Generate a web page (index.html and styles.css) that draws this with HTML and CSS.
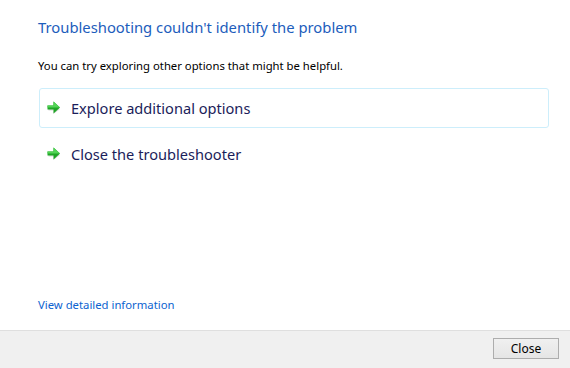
FILE: index.html
```html
<!DOCTYPE html>
<html>
<head>
    <title>Troubleshooting</title>
    <link rel="stylesheet" href="styles.css">
</head>
<body>
    <div class="dialog">
        <div class="content">
            <h1 class="title">Troubleshooting couldn't identify the problem</h1>
            <p class="intro">You can try exploring other options that might be helpful.</p>

            <div class="options">
                <a class="option option-hover" href="#">
                    <svg class="arrow" width="14" height="14" viewBox="0 0 14 14">
                        <path d="M1.5 6.5h5V3l6.5 5-6.5 5V9.5h-5z" fill="#aaa" opacity="0.45"/>
                        <path d="M0.5 4.5h6V0.5l6.5 6-6.5 6V8.5h-6z" fill="#1fa526"/>
                        <path d="M0.5 4.5h6V0.5l6.5 6H0.5z" fill="#52d456"/>
                    </svg>
                    <span>Explore additional options</span>
                </a>
                <a class="option" href="#">
                    <svg class="arrow" width="14" height="14" viewBox="0 0 14 14">
                        <path d="M1.5 6.5h5V3l6.5 5-6.5 5V9.5h-5z" fill="#aaa" opacity="0.45"/>
                        <path d="M0.5 4.5h6V0.5l6.5 6-6.5 6V8.5h-6z" fill="#1fa526"/>
                        <path d="M0.5 4.5h6V0.5l6.5 6H0.5z" fill="#52d456"/>
                    </svg>
                    <span>Close the troubleshooter</span>
                </a>
            </div>

            <a class="details" href="#">View detailed information</a>
        </div>

        <div class="footer">
            <button class="close-btn">Close</button>
        </div>
    </div>
</body>
</html>
```

FILE: styles.css
```css
html, body {
    margin: 0;
    padding: 0;
    background-color: #fff;
    font-family: "Noto Sans", "Open Sans", sans-serif;
}

.dialog {
    width: 570px;
    height: 368px;
    display: flex;
    flex-direction: column;
}

.content {
    flex: 1;
    padding: 17px 21px 0 38px;
    display: flex;
    flex-direction: column;
}

.title {
    margin: 0;
    font-size: 14.8px;
    font-weight: normal;
    color: #1d5dbc;
    line-height: 20px;
}

.intro {
    margin: 21px 0 0 0;
    font-size: 11.3px;
    color: #000;
    line-height: 16px;
}

.options {
    margin-top: 14px;
    display: flex;
    flex-direction: column;
    gap: 6px;
}

.option {
    display: flex;
    align-items: center;
    height: 38px;
    margin-left: 1px;
    padding-left: 7px;
    border: 1px solid transparent;
    border-radius: 3px;
    text-decoration: none;
    color: #1b1d5a;
    font-size: 14.6px;
}

.option-hover {
    border-color: #cdeefb;
}

.arrow {
    margin-right: 10px;
}

.details {
    margin-top: auto;
    margin-bottom: 18px;
    font-size: 11.3px;
    color: #0c63d0;
    text-decoration: none;
}

.footer {
    height: 37px;
    background-color: #f0f0f0;
    border-top: 1px solid #dfdfdf;
    display: flex;
    align-items: center;
    justify-content: flex-end;
    padding-right: 11px;
}

.close-btn {
    width: 66px;
    height: 21px;
    padding: 0;
    margin-top: -2px;
    background: linear-gradient(#f0f0f0, #e5e5e5);
    border: 1px solid #adadad;
    font-family: "Noto Sans", "Open Sans", sans-serif;
    font-size: 12px;
    color: #000;
}
```
